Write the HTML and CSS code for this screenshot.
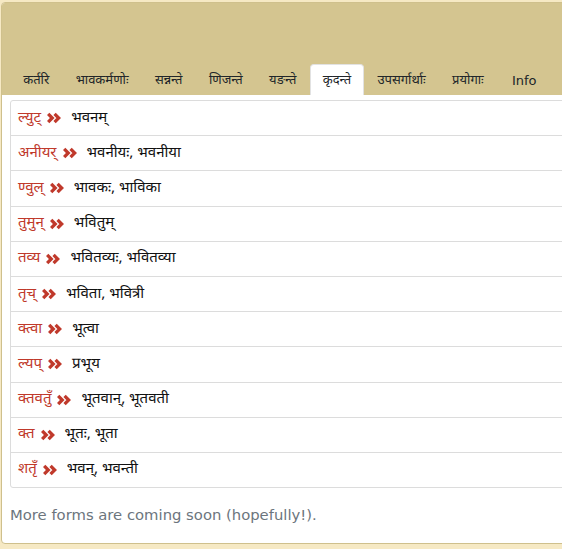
FILE: index.html
```html
<!DOCTYPE html>
<html>
<head>
<meta charset="utf-8">
<link rel="stylesheet" href="styles.css">
</head>
<body>
<div class="card">
  <div class="card-header">
    <ul class="tabs">
      <li class="tab">कर्तरि</li>
      <li class="tab">भावकर्मणोः</li>
      <li class="tab">सन्नन्ते</li>
      <li class="tab">णिजन्ते</li>
      <li class="tab">यङन्ते</li>
      <li class="tab active">कृदन्ते</li>
      <li class="tab">उपसर्गार्थाः</li>
      <li class="tab">प्रयोगाः</li>
      <li class="tab info">Info</li>
    </ul>
  </div>
  <div class="card-body">
    <ul class="list">
      <li class="row"><span class="sfx">ल्युट्</span><svg class="chev" viewBox="0 0 12 10"><path d="M1 1.5 L4.5 5 L1 8.5 M6.5 1.5 L10 5 L6.5 8.5"/></svg><span class="form">भवनम्</span></li>
      <li class="row"><span class="sfx">अनीयर्</span><svg class="chev" viewBox="0 0 12 10"><path d="M1 1.5 L4.5 5 L1 8.5 M6.5 1.5 L10 5 L6.5 8.5"/></svg><span class="form">भवनीयः, भवनीया</span></li>
      <li class="row"><span class="sfx">ण्वुल्</span><svg class="chev" viewBox="0 0 12 10"><path d="M1 1.5 L4.5 5 L1 8.5 M6.5 1.5 L10 5 L6.5 8.5"/></svg><span class="form">भावकः, भाविका</span></li>
      <li class="row"><span class="sfx">तुमुन्</span><svg class="chev" viewBox="0 0 12 10"><path d="M1 1.5 L4.5 5 L1 8.5 M6.5 1.5 L10 5 L6.5 8.5"/></svg><span class="form">भवितुम्</span></li>
      <li class="row"><span class="sfx">तव्य</span><svg class="chev" viewBox="0 0 12 10"><path d="M1 1.5 L4.5 5 L1 8.5 M6.5 1.5 L10 5 L6.5 8.5"/></svg><span class="form">भवितव्यः, भवितव्या</span></li>
      <li class="row"><span class="sfx">तृच्</span><svg class="chev" viewBox="0 0 12 10"><path d="M1 1.5 L4.5 5 L1 8.5 M6.5 1.5 L10 5 L6.5 8.5"/></svg><span class="form">भविता, भवित्री</span></li>
      <li class="row"><span class="sfx">क्त्वा</span><svg class="chev" viewBox="0 0 12 10"><path d="M1 1.5 L4.5 5 L1 8.5 M6.5 1.5 L10 5 L6.5 8.5"/></svg><span class="form">भूत्वा</span></li>
      <li class="row"><span class="sfx">ल्यप्</span><svg class="chev" viewBox="0 0 12 10"><path d="M1 1.5 L4.5 5 L1 8.5 M6.5 1.5 L10 5 L6.5 8.5"/></svg><span class="form">प्रभूय</span></li>
      <li class="row"><span class="sfx">क्तवतुँ</span><svg class="chev" viewBox="0 0 12 10"><path d="M1 1.5 L4.5 5 L1 8.5 M6.5 1.5 L10 5 L6.5 8.5"/></svg><span class="form">भूतवान्, भूतवती</span></li>
      <li class="row"><span class="sfx">क्त</span><svg class="chev" viewBox="0 0 12 10"><path d="M1 1.5 L4.5 5 L1 8.5 M6.5 1.5 L10 5 L6.5 8.5"/></svg><span class="form">भूतः, भूता</span></li>
      <li class="row"><span class="sfx">शतृँ</span><svg class="chev" viewBox="0 0 12 10"><path d="M1 1.5 L4.5 5 L1 8.5 M6.5 1.5 L10 5 L6.5 8.5"/></svg><span class="form">भवन्, भवन्ती</span></li>
    </ul>
    <p class="note">More forms are coming soon (hopefully!).</p>
  </div>
</div>
</body>
</html>
```
FILE: styles.css
```css
html, body {
  margin: 0;
  padding: 0;
  background: #f6e9c4;
  overflow: hidden;
}
body {
  padding-top: 2px;
  padding-left: 1px;
  font-family: "Noto Sans Devanagari", "Noto Sans", sans-serif;
}
.card {
  width: 620px;
  border: 1px solid #cfc08c;
  border-radius: 4px;
  background: #fff;
  overflow: hidden;
}
.card-header {
  background: #d4c590;
  height: 92px;
  display: flex;
  align-items: flex-end;
  padding-left: 8px;
}
.tabs {
  list-style: none;
  margin: 0;
  padding: 0;
  display: flex;
}
.tab {
  font-size: 13px;
  color: #212529;
  padding: 0 12.2px;
  height: 30px;
  line-height: 31px;
  border: 1px solid transparent;
  border-bottom: 0;
  border-radius: 4px 4px 0 0;
}
.tab.active {
  background: #fff;
  border-color: #e2e2e2;
}
.tab.info {
  font-family: "DejaVu Sans", sans-serif;
  font-size: 13px;
  padding-left: 14px;
}
.card-body {
  padding: 5px 8px 20px 8px;
}
.list {
  list-style: none;
  margin: 0;
  padding: 0;
  border: 1px solid #dcdcdc;
  border-radius: 3px;
}
.row {
  height: 34.2px;
  display: flex;
  align-items: center;
  padding-left: 7px;
  font-size: 15px;
  border-top: 1px solid #dcdcdc;
}
.row:first-child {
  border-top: 0;
}
.sfx {
  color: #c0392b;
}
.chev {
  width: 14px;
  height: 12px;
  margin-left: 6px;
  margin-right: 10px;
  fill: none;
  stroke: #c0392b;
  stroke-width: 2.8;
  stroke-linecap: butt;
  stroke-linejoin: miter;
}
.form {
  color: #111;
}
.note {
  font-family: "DejaVu Sans", sans-serif;
  font-size: 14.8px;
  color: #6c757d;
  margin: 18px 0 0 0;
}
```
